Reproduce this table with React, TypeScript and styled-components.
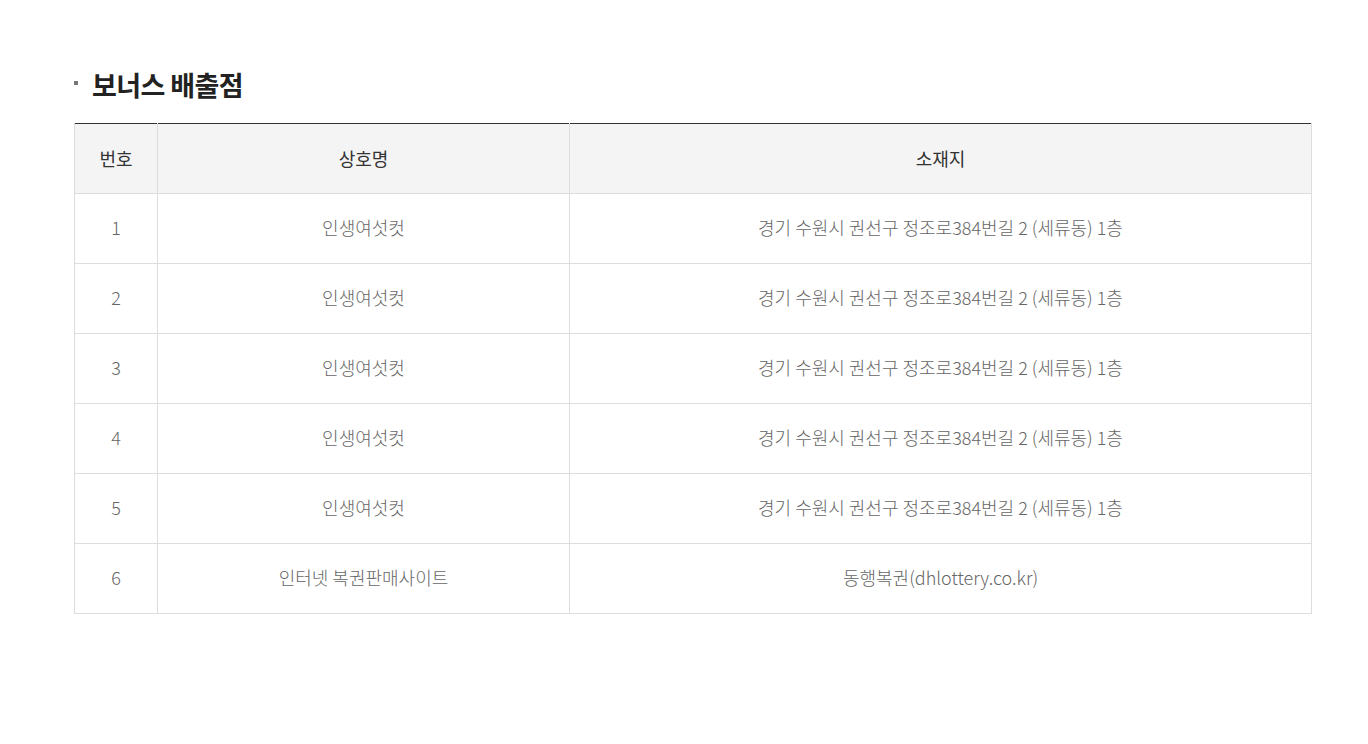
import styled, { createGlobalStyle } from 'styled-components'

const GlobalStyle = createGlobalStyle`
  body {
    margin: 0;
    background: #fff;
    font-family: 'Noto Sans CJK KR', 'Noto Sans', sans-serif;
  }
`

const Wrap = styled.div`
  padding: 65px 56px 0 74px;
`

const Title = styled.h3`
  display: flex;
  align-items: center;
  gap: 14px;
  margin: 0 0 20px;
  height: 38px;
  font-size: 27px;
  font-weight: 700;
  color: #222;
  letter-spacing: -0.6px;
  &::before {
    content: '';
    width: 4px;
    height: 4px;
    background: #777;
    margin-top: -3px;
  }
`

const Table = styled.table`
  width: 1238px;
  border-collapse: collapse;
  border-top: 1px solid #333;
  table-layout: fixed;
`

const Th = styled.th<{ w?: number }>`
  width: ${(p) => (p.w ? `${p.w}px` : 'auto')};
  height: 67px;
  padding: 0 0 2px;
  background: #f4f4f4;
  border: 1px solid #ddd;
  border-top: none;
  font-size: 18px;
  font-weight: 400;
  color: #333;
  text-align: center;
`

const Td = styled.td`
  height: 65px;
  padding: 0 0 4px;
  border: 1px solid #ddd;
  font-size: 18px;
  font-weight: 300;
  color: #666;
  text-align: center;
`

const rows = [
  ['1', '인생여섯컷', '경기 수원시 권선구 정조로384번길 2 (세류동) 1층'],
  ['2', '인생여섯컷', '경기 수원시 권선구 정조로384번길 2 (세류동) 1층'],
  ['3', '인생여섯컷', '경기 수원시 권선구 정조로384번길 2 (세류동) 1층'],
  ['4', '인생여섯컷', '경기 수원시 권선구 정조로384번길 2 (세류동) 1층'],
  ['5', '인생여섯컷', '경기 수원시 권선구 정조로384번길 2 (세류동) 1층'],
  ['6', '인터넷 복권판매사이트', '동행복권(dhlottery.co.kr)'],
]

export default function App() {
  return (
    <>
      <GlobalStyle />
      <Wrap>
        <Title>보너스 배출점</Title>
        <Table>
          <thead>
            <tr>
              <Th w={82}>번호</Th>
              <Th w={411}>상호명</Th>
              <Th>소재지</Th>
            </tr>
          </thead>
          <tbody>
            {rows.map((r) => (
              <tr key={r[0]}>
                <Td>{r[0]}</Td>
                <Td>{r[1]}</Td>
                <Td>{r[2]}</Td>
              </tr>
            ))}
          </tbody>
        </Table>
      </Wrap>
    </>
  )
}
